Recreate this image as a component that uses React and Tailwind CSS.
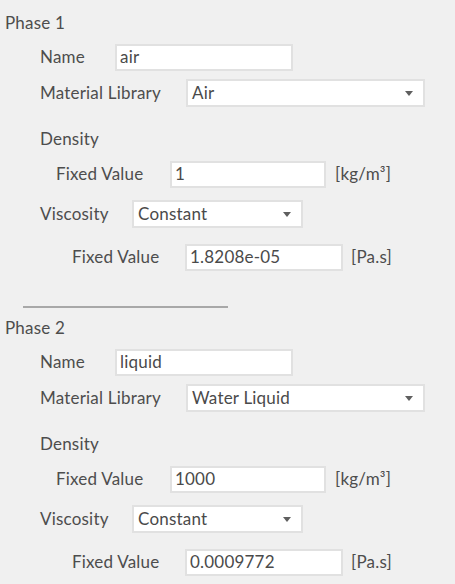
import React from 'react';

const font = { fontFamily: 'Lato, "Liberation Sans", sans-serif' };

const Caret = () => (
  <svg width="8" height="5" viewBox="0 0 8 5" className="shrink-0">
    <path d="M0 0h8L4 5z" fill="#5f5f5f" />
  </svg>
);

const TextBox = ({ value, className = '' }) => (
  <div
    className={`h-[27px] bg-white border-2 border-[#e1e1e1] flex items-center pl-[3px] text-[17px] tracking-[0.2px] text-[#4a4a4a] ${className}`}
  >
    {value}
  </div>
);

const SelectBox = ({ value, className = '' }) => (
  <div
    className={`h-[28px] bg-white border-2 border-[#e1e1e1] flex items-center justify-between pl-[4px] pr-[10px] text-[17px] tracking-[0.2px] text-[#4a4a4a] ${className}`}
  >
    <span>{value}</span>
    <Caret />
  </div>
);

const Row = ({ mt, children }) => (
  <div className={`h-[28px] flex items-center ${mt}`}>{children}</div>
);

const Label = ({ children, className }) => (
  <span className={`text-[17px] tracking-[0.2px] text-[#4d4d4d] whitespace-nowrap ${className}`}>
    {children}
  </span>
);

const Phase = ({ title, name, material, density, viscosity, top }) => (
  <div>
    <Row mt={top}>
      <Label className="ml-[5px]">{title}</Label>
    </Row>
    <Row mt="mt-[6px]">
      <Label className="ml-[40px] w-[75px]">Name</Label>
      <TextBox value={name} className="w-[178px]" />
    </Row>
    <Row mt="mt-[8px]">
      <Label className="ml-[40px] w-[146px]">Material Library</Label>
      <SelectBox value={material} className="w-[239px]" />
    </Row>
    <Row mt="mt-[18px]">
      <Label className="ml-[40px]">Density</Label>
    </Row>
    <Row mt="mt-[7px]">
      <Label className="ml-[56px] w-[114px]">Fixed Value</Label>
      <TextBox value={density} className="w-[156px]" />
      <Label className="ml-[9px]">[kg/m³]</Label>
    </Row>
    <Row mt="mt-[12px]">
      <Label className="ml-[40px] w-[92px]">Viscosity</Label>
      <SelectBox value="Constant" className="w-[171px]" />
    </Row>
    <Row mt="mt-[15px]">
      <Label className="ml-[72px] w-[113px]">Fixed Value</Label>
      <TextBox value={viscosity} className="w-[158px]" />
      <Label className="ml-[8px]">[Pa.s]</Label>
    </Row>
  </div>
);

export default function App() {
  return (
    <div className="w-[455px] h-[584px] bg-[#f0f0f0] overflow-hidden" style={font}>
      <Phase title="Phase 1" name="air" material="Air" density="1" viscosity="1.8208e-05" top="mt-[9px]" />
      <div className="ml-[23px] mt-[35px] w-[205px] h-[2px] bg-[#a8a8a8]" />
      <Phase title="Phase 2" name="liquid" material="Water Liquid" density="1000" viscosity="0.0009772" top="mt-[6px]" />
    </div>
  );
}
